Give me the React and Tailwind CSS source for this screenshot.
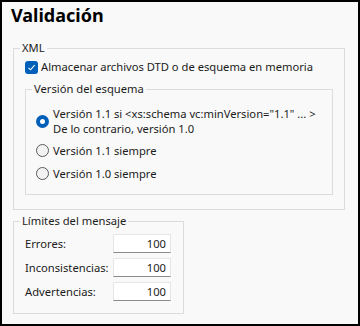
const FONT = { fontFamily: '"Noto Sans", "Open Sans", sans-serif' };

function Check() {
  return (
    <span className="flex h-[13px] w-[13px] shrink-0 items-center justify-center rounded-[3px] bg-[#005fb8]">
      <svg width="9" height="9" viewBox="0 0 9 9">
        <path d="M1.5 4.8 L3.6 6.8 L7.6 2.2" fill="none" stroke="white" strokeWidth="1.1" />
      </svg>
    </span>
  );
}

function Radio({ on }) {
  if (on) {
    return (
      <span className="flex h-[13px] w-[13px] shrink-0 items-center justify-center rounded-full bg-[#005fb8]">
        <span className="h-[5px] w-[5px] rounded-full bg-white" />
      </span>
    );
  }
  return <span className="h-[13px] w-[13px] shrink-0 rounded-full border border-[#5a5a5a] bg-[#f3f3f3]" />;
}

function Group({ label, className, children }) {
  return (
    <fieldset className={`border border-[#dcdcdc] ${className}`}>
      <legend className="ml-[6px] px-[2px] text-[11.2px] leading-[16px]">{label}</legend>
      {children}
    </fieldset>
  );
}

function Limit({ label }) {
  return (
    <div className="flex items-center h-[19px]">
      <span className="w-[88px] text-[11.2px] leading-[16px]">{label}</span>
      <span className="h-[19px] w-[58px] border border-[#e6e6e6] border-b-[#8a8a8a] bg-white pr-[4px] text-right text-[11.2px] leading-[17px]">
        100
      </span>
    </div>
  );
}

export default function App() {
  return (
    <div className="h-[326px] w-[360px] border-2 border-black bg-[#f9f9f9] text-[#1b1b1b]" style={FONT}>
      <h1 className="ml-[9px] mt-[1px] text-[18px] font-bold leading-[24px] text-black">Validación</h1>

      <Group label="XML" className="ml-[11px] mt-[13px] h-[170px] w-[332px]">
        <label className="ml-[11px] mt-[3px] flex items-center gap-[3px] text-[11.2px] leading-[16px]">
          <Check />
          <span>Almacenar archivos DTD o de esquema en memoria</span>
        </label>

        <Group label="Versión del esquema" className="ml-[11px] mt-[6px] h-[114px] w-[308px]">
          <div className="ml-[10px] mt-[9px] flex flex-col gap-[6px] text-[11.2px] leading-[15px]">
            <div className="flex items-center gap-[4px]">
              <Radio on />
              <span className="whitespace-nowrap">
                Versión 1.1 si &lt;xs:schema vc:minVersion="1.1" ... &gt;
                <br />
                De lo contrario, versión 1.0
              </span>
            </div>
            <div className="flex items-center gap-[4px] h-[17px]">
              <Radio />
              <span>Versión 1.1 siempre</span>
            </div>
            <div className="flex items-center gap-[4px] h-[17px]">
              <Radio />
              <span>Versión 1.0 siempre</span>
            </div>
          </div>
        </Group>
      </Group>

      <Group label="Límites del mensaje" className="ml-[11px] mt-[3px] h-[101px] w-[171px]">
        <div className="ml-[11px] mt-[5px] flex flex-col gap-[5px]">
          <Limit label="Errores:" />
          <Limit label="Inconsistencias:" />
          <Limit label="Advertencias:" />
        </div>
      </Group>
    </div>
  );
}
